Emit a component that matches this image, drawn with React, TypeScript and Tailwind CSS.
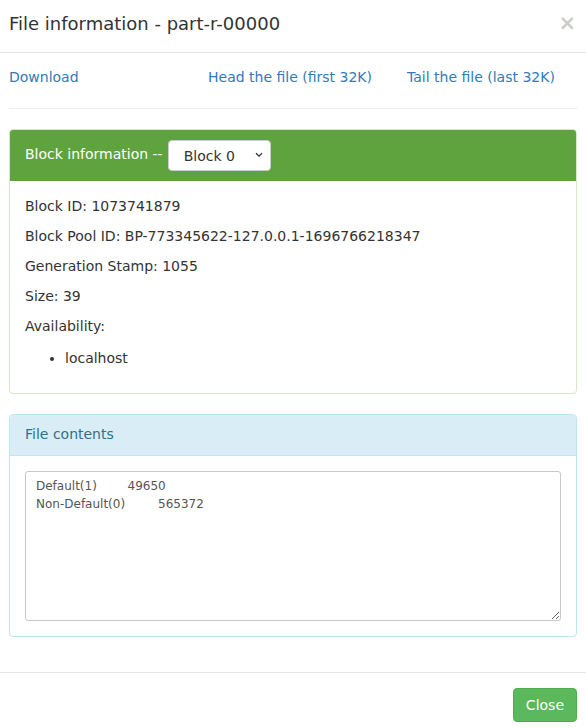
import { useState } from 'react';

const contents = 'Default(1)\t49650\nNon-Default(0)\t\t565372\n';

export default function App() {
  const [block, setBlock] = useState('0');

  return (
    <div className="w-[586px] h-[728px] bg-white text-[14px] leading-[20px] text-[#333]" style={{ fontFamily: '"DejaVu Sans", Verdana, sans-serif' }}>
      {/* header */}
      <div className="flex items-start justify-between border-b border-[#e5e5e5] pl-[9px] pr-[10px] pt-[11px] pb-[15px]">
        <h4 className="text-[18px] leading-[26px] text-[#333]">File information - part-r-00000</h4>
        <button type="button" className="text-[21px] leading-[21px] font-bold text-black opacity-20 mt-[2px]">
          ×
        </button>
      </div>

      {/* body */}
      <div className="px-[9px] pt-[14px] pb-[15px]">
        <div className="flex">
          <a href="#" className="w-[199px] text-[#337ab7]">Download</a>
          <a href="#" className="w-[199px] text-[#337ab7]">Head the file (first 32K)</a>
          <a href="#" className="text-[#337ab7]">Tail the file (last 32K)</a>
        </div>
        <hr className="mt-[21px] mb-[20px] border-t border-[#eee]" />

        <div className="rounded-[4px] border border-[#d6e9c6] mb-[20px] overflow-hidden">
          <div className="flex items-center bg-[#5fa33e] text-white px-[15px] py-[10px]">
            <span className="pb-[4px]">Block information --</span>
            <div className="relative ml-[5px]">
              <select
                value={block}
                onChange={e => setBlock(e.target.value)}
                className="appearance-none w-[103px] h-[31px] rounded-[4px] border border-[#ccc] bg-white pl-[15px] text-[14px] text-[#333]"
              >
                <option value="0">Block 0</option>
              </select>
              <svg className="pointer-events-none absolute right-[8px] top-[12px]" width="8" height="6" viewBox="0 0 8 6">
                <path d="M1 1.2 L4 4.2 L7 1.2" fill="none" stroke="#333" strokeWidth="1.3" />
              </svg>
            </div>
          </div>
          <div className="p-[15px]">
            <p className="mb-[10px]">Block ID: 1073741879</p>
            <p className="mb-[10px]">Block Pool ID: BP-773345622-127.0.0.1-1696766218347</p>
            <p className="mb-[10px]">Generation Stamp: 1055</p>
            <p className="mb-[10px]">Size: 39</p>
            <p className="mb-[10px]">Availability:</p>
            <ul className="list-disc pl-[40px] pt-[2px] mb-[10px]">
              <li>localhost</li>
            </ul>
          </div>
        </div>

        <div className="rounded-[4px] border border-[#bce8f1] mb-[20px] overflow-hidden">
          <div className="bg-[#d9edf7] text-[#31708f] border-b border-[#bce8f1] px-[15px] pt-[9px] pb-[11px]">File contents</div>
          <div className="p-[15px]">
            <textarea
              readOnly
              defaultValue={contents}
              className="block w-full h-[150px] rounded-[3px] border border-[#c8c8c8] px-[10px] pt-[5px] text-[12px] leading-[18px] text-[#555] outline-none"
              style={{ fontFamily: '"DejaVu Sans", Verdana, sans-serif', tabSize: 8 }}
            />
          </div>
        </div>
      </div>

      {/* footer */}
      <div className="flex justify-end border-t border-[#e5e5e5] px-[9px] py-[15px]">
        <button type="button" className="rounded-[4px] border border-[#4cae4c] bg-[#5cb85c] px-[12px] py-[6px] text-white text-[14px] leading-[20px]">
          Close
        </button>
      </div>
    </div>
  );
}
